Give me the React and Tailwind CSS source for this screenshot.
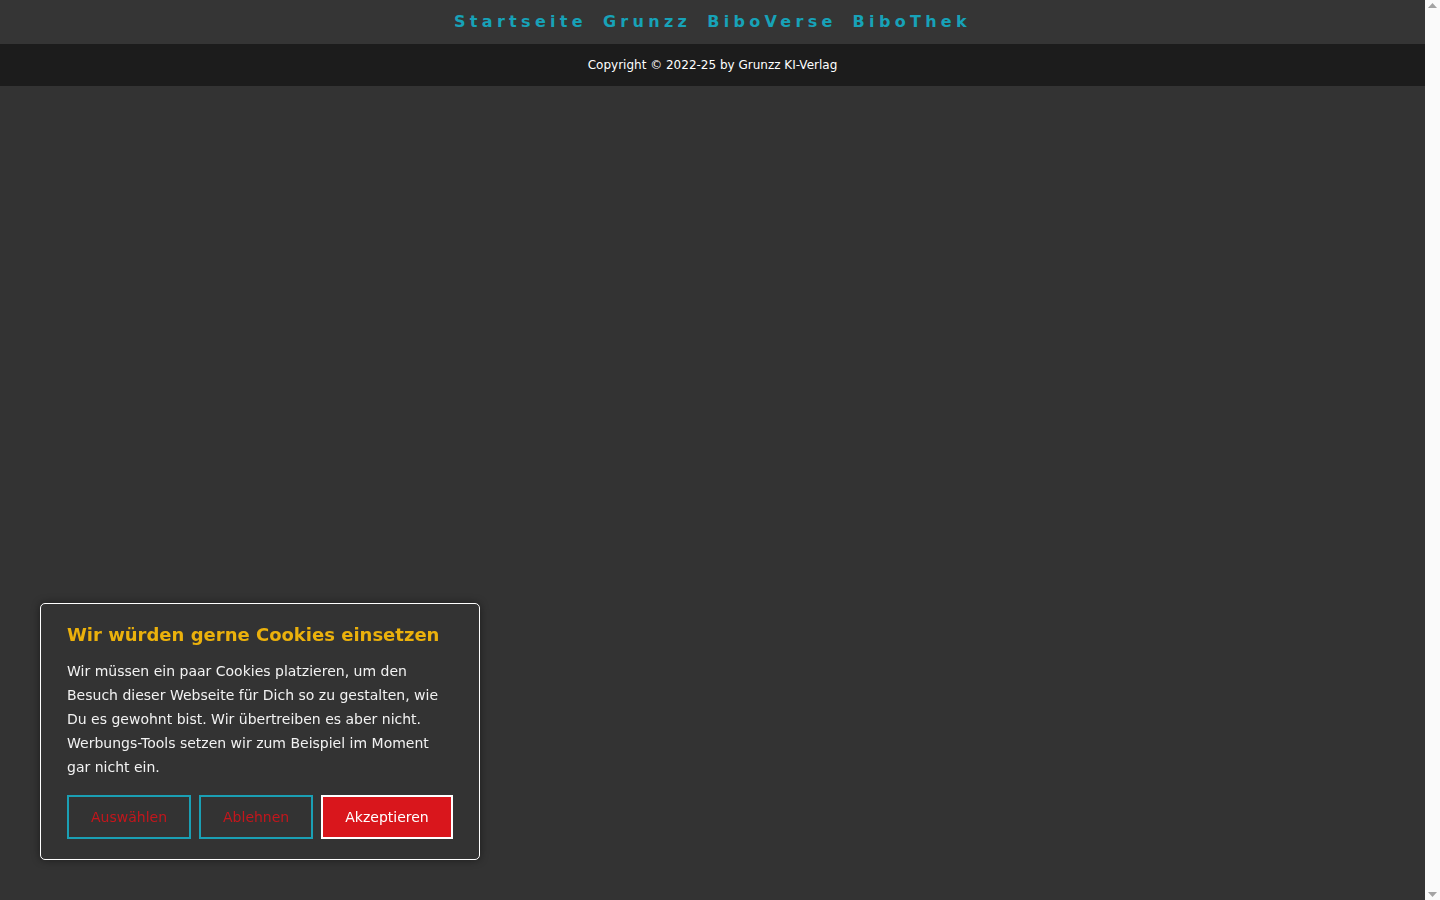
import { useState } from "react"

const links = ["Startseite", "Grunzz", "BiboVerse", "BiboThek"]

function CookieBanner() {
  const [open, setOpen] = useState(true)
  if (!open) return null

  return (
    <div className="fixed left-10 bottom-[40px] w-[440px] rounded-[5px] border border-white bg-[#333333] px-[26px] pt-[18px] pb-[20px] shadow-[0_0_8px_rgba(0,0,0,0.45)]">
      <h2 className="text-[18px] font-bold leading-[26px] text-[#ebb10c]">
        Wir würden gerne Cookies einsetzen
      </h2>
      <p className="mt-[11px] text-[14px] leading-[24px] text-[#f2f2f2]">
        Wir müssen ein paar Cookies platzieren, um den Besuch dieser Webseite für Dich so zu gestalten, wie Du es gewohnt bist.
        Wir übertreiben es aber nicht. Werbungs-Tools setzen wir zum Beispiel im Moment gar nicht ein.
      </p>
      <div className="mt-[16px] flex gap-2">
        <button
          onClick={() => setOpen(false)}
          className="border-2 border-[#1a9fb4] bg-transparent px-[22px] py-[10px] text-[14px] leading-[20px] text-[#c4161c]"
        >
          Auswählen
        </button>
        <button
          onClick={() => setOpen(false)}
          className="border-2 border-[#1a9fb4] bg-transparent px-[22px] py-[10px] text-[14px] leading-[20px] text-[#c4161c]"
        >
          Ablehnen
        </button>
        <button
          onClick={() => setOpen(false)}
          className="border-2 border-white bg-[#d9161c] px-[22px] py-[10px] text-[14px] leading-[20px] text-white"
        >
          Akzeptieren
        </button>
      </div>
    </div>
  )
}

// classic light scrollbar track with arrow buttons
function ScrollTrack() {
  return (
    <aside className="flex h-screen w-[15px] shrink-0 flex-col items-center justify-between bg-[#fafafa] py-[3px]">
      <svg width="9" height="5" viewBox="0 0 9 5">
        <path d="M4.5 0 L9 5 L0 5 Z" fill="#a3a3a3" />
      </svg>
      <svg width="9" height="5" viewBox="0 0 9 5">
        <path d="M0 0 L9 0 L4.5 5 Z" fill="#a3a3a3" />
      </svg>
    </aside>
  )
}

export default function App() {
  return (
    <div className="flex h-screen overflow-hidden bg-[#333333] font-['DejaVu_Sans',sans-serif]">
      <div className="flex-1">
        {/* Top navigation */}
        <nav className="flex h-[44px] items-center justify-center gap-[16px] bg-[#353535]">
          {links.map((link) => (
            <a
              key={link}
              href="#"
              className="text-[16px] font-bold tracking-[4.3px] text-[#17a2b8]"
            >
              {link}
            </a>
          ))}
        </nav>

        {/* Copyright strip */}
        <div className="flex h-[42px] items-center justify-center bg-[#1c1c1c] text-[12px] text-white">
          Copyright © 2022-25 by Grunzz KI-Verlag
        </div>
      </div>

      <ScrollTrack />
      <CookieBanner />
    </div>
  )
}
